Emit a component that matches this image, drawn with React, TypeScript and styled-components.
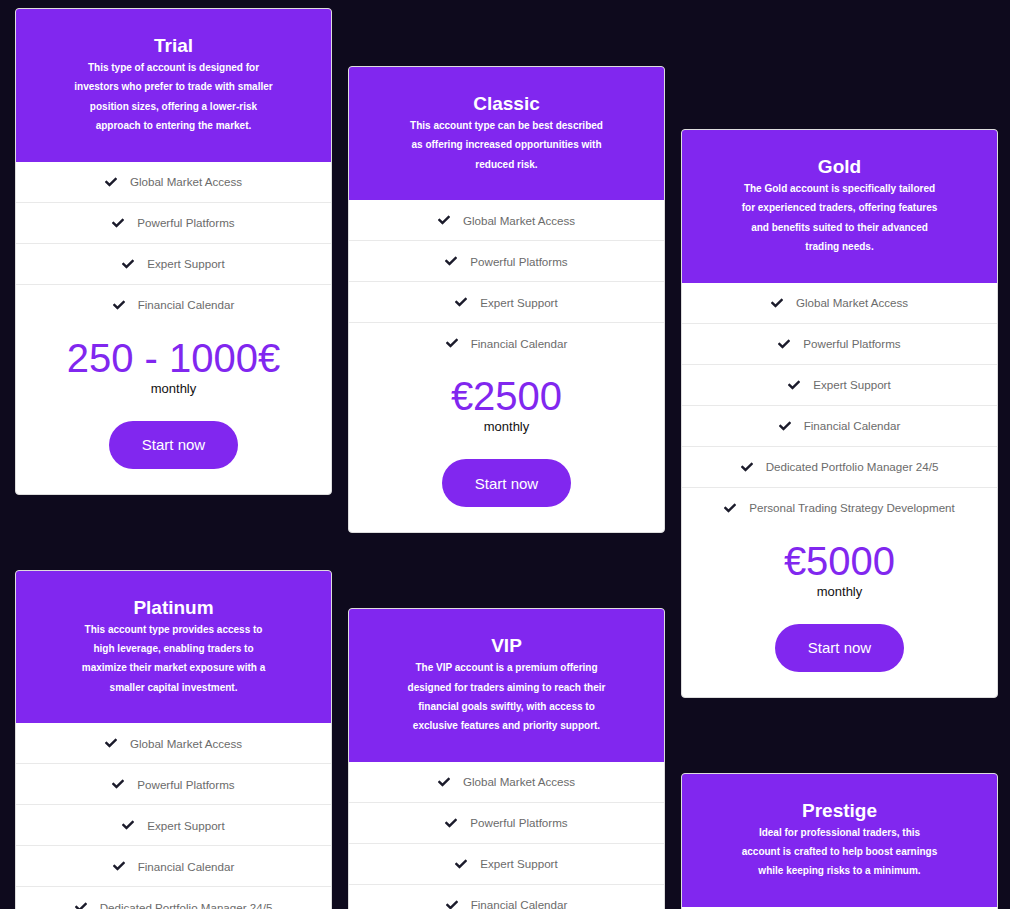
import styled, { createGlobalStyle } from "styled-components";
import { FaCheck } from "react-icons/fa";

const GlobalStyle = createGlobalStyle`
  * { box-sizing: border-box; }
  html, body {
    margin: 0;
    padding: 0;
    background: #0e0a1d;
    font-family: "Liberation Sans", Arial, sans-serif;
  }
`;

const Board = styled.div`
  display: flex;
  align-items: flex-start;
  gap: 16px;
  padding: 0 12px 0 15px;
  min-height: 909px;
  background: #0e0a1d;
`;

const Column = styled.div<{ $offset: number }>`
  display: flex;
  flex-direction: column;
  gap: 75px;
  width: 317px;
  padding-top: ${(p) => p.$offset}px;
`;

const Card = styled.div`
  width: 100%;
  background: #fff;
  border: 1px solid #ddd;
  border-radius: 4px;
  overflow: hidden;
`;

const Header = styled.div`
  background: #8127ef;
  color: #fff;
  text-align: center;
  padding: 25px 20px 26px;
  h3 {
    margin: 0;
    font-size: 19px;
    line-height: 24px;
    font-weight: 700;
  }
  p {
    margin: 0 auto;
    max-width: 200px;
    font-size: 10px;
    line-height: 19.4px;
    font-weight: 700;
  }
`;

const Features = styled.ul`
  list-style: none;
  margin: 0;
  padding: 0;
`;

const Feature = styled.li`
  height: 41px;
  display: flex;
  align-items: center;
  justify-content: center;
  gap: 13px;
  border-bottom: 1px solid #e9e9e9;
  color: #6b6b6b;
  font-size: 11.6px;
  &:last-child {
    border-bottom-color: transparent;
  }
  svg {
    width: 12px;
    height: 12px;
    color: #1b1b2b;
    flex-shrink: 0;
  }
`;

const PriceBox = styled.div`
  display: flex;
  flex-direction: column;
  align-items: center;
  padding: 10px 0 25px;
`;

const Price = styled.div`
  color: #8127ef;
  font-size: 40px;
  line-height: 45px;
`;

const Period = styled.div`
  color: #111;
  font-size: 13px;
  line-height: 16px;
`;

const StartButton = styled.button`
  margin-top: 24px;
  height: 48px;
  padding: 0 33px;
  border: none;
  border-radius: 24px;
  background: #8127ef;
  color: #fff;
  font-family: inherit;
  font-size: 15px;
  cursor: pointer;
`;

type Plan = {
  name: string;
  text: string;
  features: string[];
  price: string;
};

const base = [
  "Global Market Access",
  "Powerful Platforms",
  "Expert Support",
  "Financial Calendar",
];
const extra = [
  "Dedicated Portfolio Manager 24/5",
  "Personal Trading Strategy Development",
];

const columns: { offset: number; plans: Plan[] }[] = [
  {
    offset: 8,
    plans: [
      {
        name: "Trial",
        text: "This type of account is designed for investors who prefer to trade with smaller position sizes, offering a lower-risk approach to entering the market.",
        features: base,
        price: "250 - 1000€",
      },
      {
        name: "Platinum",
        text: "This account type provides access to high leverage, enabling traders to maximize their market exposure with a smaller capital investment.",
        features: [...base, ...extra],
        price: "€10000",
      },
    ],
  },
  {
    offset: 66,
    plans: [
      {
        name: "Classic",
        text: "This account type can be best described as offering increased opportunities with reduced risk.",
        features: base,
        price: "€2500",
      },
      {
        name: "VIP",
        text: "The VIP account is a premium offering designed for traders aiming to reach their financial goals swiftly, with access to exclusive features and priority support.",
        features: [...base, ...extra],
        price: "€25000",
      },
    ],
  },
  {
    offset: 129,
    plans: [
      {
        name: "Gold",
        text: "The Gold account is specifically tailored for experienced traders, offering features and benefits suited to their advanced trading needs.",
        features: [...base, ...extra],
        price: "€5000",
      },
      {
        name: "Prestige",
        text: "Ideal for professional traders, this account is crafted to help boost earnings while keeping risks to a minimum.",
        features: [...base, ...extra],
        price: "€50000",
      },
    ],
  },
];

const PlanCard = ({ plan }: { plan: Plan }) => (
  <Card>
    <Header>
      <h3>{plan.name}</h3>
      <p>{plan.text}</p>
    </Header>
    <Features>
      {plan.features.map((f) => (
        <Feature key={f}>
          <FaCheck />
          <span>{f}</span>
        </Feature>
      ))}
    </Features>
    <PriceBox>
      <Price>{plan.price}</Price>
      <Period>monthly</Period>
      <StartButton>Start now</StartButton>
    </PriceBox>
  </Card>
);

const App = () => {
  return (
    <>
      <GlobalStyle />
      <Board>
        {columns.map((col) => (
          <Column key={col.offset} $offset={col.offset}>
            {col.plans.map((p) => (
              <PlanCard plan={p} key={p.name} />
            ))}
          </Column>
        ))}
      </Board>
    </>
  );
};

export default App;
